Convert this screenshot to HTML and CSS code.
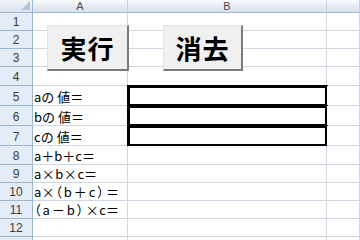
FILE: index.html
```html
<!DOCTYPE html>
<html>
<head>
<meta charset="utf-8">
<link rel="stylesheet" href="styles.css">
</head>
<body>
<div class="sheet">
  <div class="grid">
    <div class="corner"><span class="tri"></span></div>
    <div class="colhead">A</div>
    <div class="colhead">B</div>
    <div class="colhead"></div>

    <div class="rowhead">1</div><div class="cell"></div><div class="cell"></div><div class="cell"></div>
    <div class="rowhead">2</div><div class="cell"></div><div class="cell"></div><div class="cell"></div>
    <div class="rowhead">3</div><div class="cell"></div><div class="cell"></div><div class="cell"></div>
    <div class="rowhead">4</div><div class="cell"></div><div class="cell"></div><div class="cell"></div>
    <div class="rowhead">5</div><div class="cell">aの<span class="gap"></span>値＝</div><div class="cell boxed"></div><div class="cell"></div>
    <div class="rowhead">6</div><div class="cell">bの<span class="gap"></span>値＝</div><div class="cell boxed"></div><div class="cell"></div>
    <div class="rowhead">7</div><div class="cell">cの<span class="gap"></span>値＝</div><div class="cell boxed"></div><div class="cell"></div>
    <div class="rowhead">8</div><div class="cell">a＋b＋c＝</div><div class="cell"></div><div class="cell"></div>
    <div class="rowhead">9</div><div class="cell">a<span class="fw">×</span>b<span class="fw">×</span>c＝</div><div class="cell"></div><div class="cell"></div>
    <div class="rowhead">10</div><div class="cell">a<span class="fw">×</span><span class="pt">（b＋c）</span>＝</div><div class="cell"></div><div class="cell"></div>
    <div class="rowhead">11</div><div class="cell"><span class="pt">（a－b）</span><span class="fw">×</span>c＝</div><div class="cell"></div><div class="cell"></div>
    <div class="rowhead">12</div><div class="cell"></div><div class="cell"></div><div class="cell"></div>
    <div class="rowhead"></div><div class="cell"></div><div class="cell"></div><div class="cell"></div>
  </div>
  <div class="btn btn-run">実行</div>
  <div class="btn btn-clear">消去</div>
</div>
</body>
</html>
```
FILE: styles.css
```css
html, body {
  margin: 0;
  padding: 0;
  background: #ffffff;
}
.sheet {
  position: relative;
  width: 360px;
  height: 240px;
  overflow: hidden;
}
.grid {
  display: grid;
  grid-template-columns: 33px 95px 199px 1fr;
  grid-template-rows: 13px 18px 18px 18px 19px 20px 20px 20px 19px 18px 18px 18px 18px 18px;
}
.grid > div {
  box-sizing: border-box;
  border-right: 1px solid #d0d7e5;
  border-bottom: 1px solid #d0d7e5;
}
.corner {
  position: relative;
  background: linear-gradient(#f3f6fa, #dbe3ee);
  border-right: 1px solid #9eb6ce !important;
  border-bottom: 1px solid #9eb6ce !important;
}
.tri {
  position: absolute;
  right: 2px;
  bottom: 2px;
  width: 0;
  height: 0;
  border-left: 9px solid transparent;
  border-bottom: 9px solid #b3c3d8;
}
.colhead {
  background: linear-gradient(#f9fbfd, #e4eaf3 60%, #d8e1ec);
  border-right: 1px solid #c5d2e2 !important;
  border-bottom: 1px solid #9eb6ce !important;
  font-family: "Liberation Sans", Arial, sans-serif;
  font-size: 11px;
  line-height: 12px;
  color: #4a4a4a;
  text-align: center;
}
.rowhead {
  background: #e4ecf7;
  border-right: 1px solid #9eb6ce !important;
  border-bottom: 1px solid #9eb6ce !important;
  font-family: "Liberation Sans", Arial, sans-serif;
  font-size: 12px;
  color: #3c3c3c;
  display: flex;
  align-items: flex-end;
  justify-content: center;
  padding-bottom: 1px;
}
.cell {
  background: #ffffff;
  font-family: "Noto Sans CJK JP", "DejaVu Sans", sans-serif;
  font-size: 13px;
  color: #000;
  display: flex;
  align-items: flex-end;
  padding-left: 1px;
  line-height: 16px;
  white-space: nowrap;
}
.fw {
  display: inline-block;
  width: 14px;
  text-align: center;
}
.gap {
  display: inline-block;
  width: 3px;
}
.pt {
  font-feature-settings: "palt";
  letter-spacing: 2px;
}
.boxed {
  outline: 3px solid #000;
  outline-offset: -2px;
}
.btn {
  position: absolute;
  top: 25px;
  height: 46px;
  box-sizing: border-box;
  background: #f0f0f0;
  border-top: 1px solid #e2e2e2;
  border-left: 1px solid #e2e2e2;
  border-right: 2px solid #7a7a7a;
  border-bottom: 2px solid #7a7a7a;
  font-family: "Noto Sans CJK JP", sans-serif;
  font-weight: bold;
  font-size: 26px;
  color: #000;
  display: flex;
  align-items: center;
  justify-content: center;
  letter-spacing: 1px;
}
.btn-run {
  left: 47px;
  width: 82px;
}
.btn-clear {
  left: 163px;
  width: 80px;
}
```
